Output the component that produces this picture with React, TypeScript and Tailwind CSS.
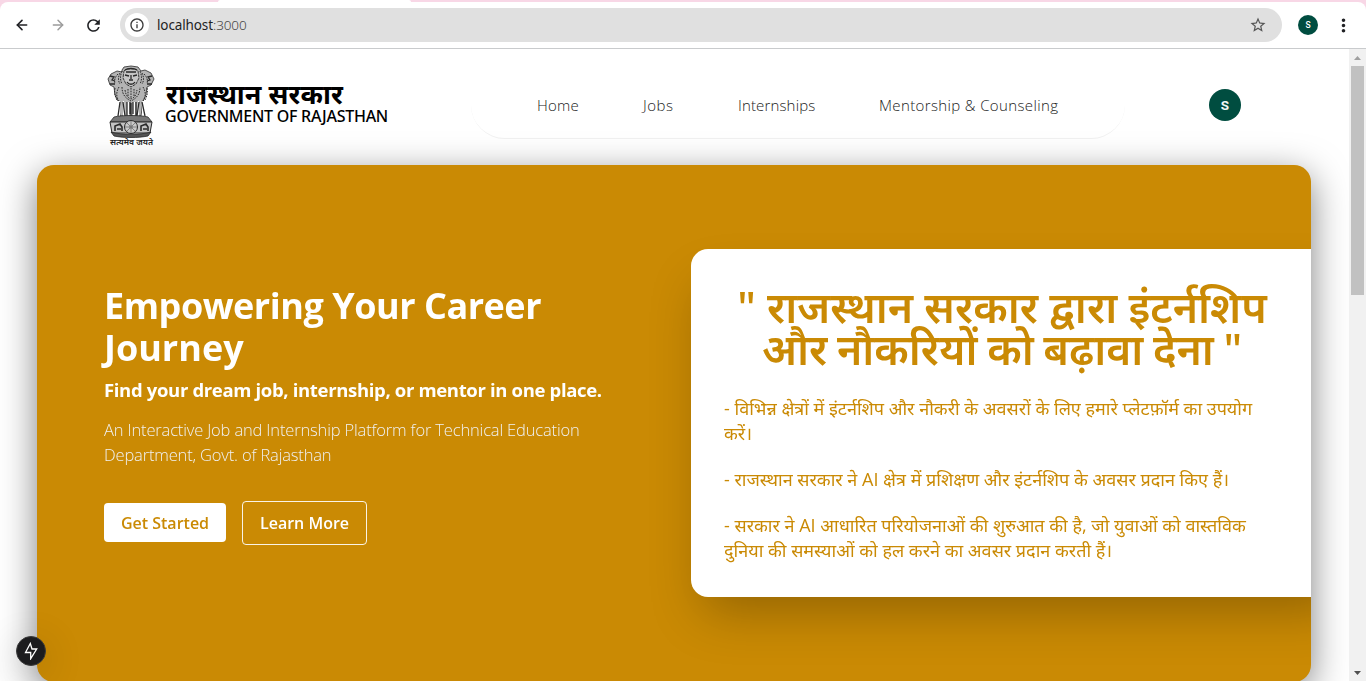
import { ArrowLeft, ArrowRight } from "lucide-react";
import { MdRefresh, MdStarBorder, MdMoreVert, MdOutlineInfo } from "react-icons/md";

function Toolbar() {
  return (
    <header className="h-[49px] shrink-0 bg-[#f8d7e6] pt-0.5">
      <div className="relative flex h-[47px] items-center rounded-t-[8px] border-b border-[#c9cbcd] bg-white font-['Noto_Sans',sans-serif]">
        <span className="absolute -top-0.5 left-[218px] h-0.5 w-[193px] rounded-t-sm bg-white" />
        <div className="flex w-[120px] shrink-0 items-center gap-5 pl-3.5 text-[#202124]">
          <ArrowLeft size={16} strokeWidth={2.4} />
          <ArrowRight size={16} strokeWidth={2.2} className="text-[#9b9b9b]" />
          <MdRefresh size={19} className="-ml-0.5" />
        </div>
        <div className="flex h-[34px] w-[1162px] shrink-0 items-center rounded-full bg-[#e0e0e0] pr-[15px] pl-[5px]">
          <span className="flex size-6 items-center justify-center rounded-full bg-white">
            <MdOutlineInfo size={16} className="text-[#3c3c3c]" />
          </span>
          <span className="ml-2 grow text-[13.5px] tracking-[-0.12px] text-[#1f1f1f]">
            localhost<span className="font-light text-[#474747]">:3000</span>
          </span>
          <MdStarBorder size={18} className="text-[#555]" />
        </div>
        <span className="ml-4 flex size-5 items-center justify-center rounded-full bg-[#004d40] pt-px font-[Roboto,sans-serif] text-[8.5px] font-medium text-white">
          S
        </span>
        <MdMoreVert size={21} className="ml-[15px] text-[#202124]" />
      </div>
    </header>
  );
}

function Emblem() {
  return (
    <svg width="50" height="82" viewBox="0 0 50 82" fill="none" stroke="#2a2a2a" strokeWidth="1">
      <path
        fill="#b4b4b4"
        strokeWidth=".8"
        d="M16 5l2-3 7-1 7 1 3 4 4-1 6 3 3 6-3 6-4 2-1 8-3 6-2 15H14l-2-15-3-6-1-8-4-2-2-6 3-5 6-3 5 1z"
      />
      <path
        strokeDasharray="1.6 1.1"
        d="M16 6c-2 5-2 9 0 13m18-13c2 5 2 9 0 13M14 8c-2 4-2 8 0 11m22-11c2 4 2 8 0 11M12 9c-3 3-4 6-3 10m29-10c3 3 4 6 3 10M13 22c-3 5-3 10 0 14m24-14c3 5 3 10 0 14M9 23c-1 5 0 8 2 12m30-12c1 5 0 8-2 12M16 22c0 7 3 11 9 14 6-3 9-7 9-14M19 25c1 6 3 8 6 9 3-1 5-3 6-9M22 24v8m6-8v8m-3-9v10"
      />
      <path fill="#c6c6c6" strokeWidth=".9" strokeDasharray="3 .7" d="M18 6c2-3 12-3 14 0l1 7-3 6-5 3-5-3-3-6z" />
      <path
        strokeWidth="1.3"
        d="M19 10l4 1m4 0l4-1M25 10v4m-2 1h4m-6 2c2 3 6 3 8 0M19 5c3-2 9-2 12 0M4 11l4 1-2 3 3 1m-5 3h5M46 11l-4 1 2 3-3 1m5 3h-5M20 7h10"
      />
      <path
        fill="#fff"
        stroke="none"
        d="M10 36l2 15h2V36zm7 0h1l1 15h-2zm4 1h2v15h-2zm6 0h2v15h-2zm5-1h1v15h-2zm4 0h3l-2 15h-1z"
      />
      <path
        strokeWidth="1.3"
        d="M14 37l-2 14m5-14l2 14m2-14v15m3-15v12m3-12v12m3-12v15m3-15l-2 14m5-14l3 14M25 38v14"
      />
      <path fill="#777" strokeWidth=".8" d="M8 52c8-2 26-2 34 0l4 5H4z" />
      <path fill="#c4c4c4" d="M4 57h42l-2 11H6z" />
      <circle cx="25" cy="62" r="6.5" fill="#c9c9c9" />
      <path stroke="#666" strokeWidth=".7" d="M25 56v12m-6-6h12m-10-4l8 8m0-8l-8 8" />
      <circle cx="25" cy="62" r="1.800" fill="#777" stroke="none" />
      <path strokeWidth="1.6" d="M9 66v-5l5-2 2 3v4m-5-2h4M35 66v-5l5-2 2 3v4m-5-2h4" />
      <path fill="#555" strokeWidth=".8" d="M5 67c10 3 30 3 40 0l-3 4c-10 2-24 2-34 0z" />
      <text
        x="25.500"
        y="80"
        textAnchor="middle"
        textLength="43"
        lengthAdjust="spacingAndGlyphs"
        stroke="none"
        fill="#222"
        className="font-['Noto_Sans',sans-serif] text-[8.5px] font-semibold"
      >
        सत्यमेव जयते
      </text>
    </svg>
  );
}

function SiteHeader() {
  return (
    <div className="flex h-[116px] items-start">
      <div className="flex w-[471px] shrink-0 pt-4 pl-[106px]">
        <Emblem />
        <div className="ml-[10px] flex flex-col pt-[13px] font-['Noto_Sans',sans-serif] text-black">
          <span className="text-[27px] leading-[32px] font-bold tracking-[0.05px] whitespace-nowrap">राजस्थान सरकार</span>
          <span className="-mt-[5px] -ml-px text-[16px] leading-[22px] font-medium tracking-[-0.25px] whitespace-nowrap">
            GOVERNMENT OF RAJASTHAN
          </span>
        </div>
      </div>
      <nav className="mt-6 flex h-[66px] w-[654px] shrink-0 items-center gap-16 rounded-b-[34px] border-b border-[#f1f1f1] pl-[66px] text-[15px] font-light text-[#222]">
        <span className="w-[42px] tracking-[0.25px] whitespace-nowrap">Home</span>
        <span className="w-[31px] tracking-[0.5px] whitespace-nowrap">Jobs</span>
        <span className="w-[77px] tracking-[0.15px] whitespace-nowrap">Internships</span>
        <span className="tracking-[0.37px] whitespace-nowrap">Mentorship &amp; Counseling</span>
      </nav>
      <span className="mt-10 ml-[84px] flex size-8 items-center justify-center rounded-full bg-[#004d40] pt-px font-[Roboto,sans-serif] text-[13.5px] font-bold text-[#f1f5f4]">
        S
      </span>
    </div>
  );
}

function Hero() {
  return (
    <section className="ml-[37px] flex h-[517px] w-[1274px] shrink-0 overflow-hidden rounded-[17px] bg-[#ca8a04]">
      <div className="w-[654px] shrink-0 pt-[120px] pl-[67px]">
        <h1 className="text-[36px] leading-[42px] font-bold tracking-[-0.47px] whitespace-nowrap text-white">
          Empowering Your Career
          <br />
          <span className="tracking-normal">Journey</span>
        </h1>
        <p className="mt-[7px] text-[18.5px] leading-[28px] font-bold tracking-[-0.34px] whitespace-nowrap text-white">
          Find your dream job, internship, or mentor in one place.
        </p>
        <p className="mt-[13px] text-[16.5px] leading-[25px] font-light tracking-[-0.16px] whitespace-nowrap text-[#f0f1f3]">
          An Interactive Job and Internship Platform for Technical Education
          <br />
          Department, Govt. of Rajasthan
        </p>
        <div className="mt-[34px] flex items-start gap-4 text-[16px] font-semibold">
          <button className="mt-0.5 h-[39px] w-[122px] rounded-[4px] bg-white pt-px whitespace-nowrap text-[#ca8a04]">Get Started</button>
          <button className="h-[44px] w-[125px] rounded-[4px] border border-white/90 whitespace-nowrap text-white">Learn More</button>
        </div>
      </div>
      <div className="mt-[84px] h-[348px] w-[660px] shrink-0 rounded-[17px] bg-white pt-[37px] pl-[33px] text-[#ca8a04] shadow-[0_26px_52px_-12px_rgba(0,0,0,0.28)]">
        <h2 className="w-[556px] text-center text-[42.8px] leading-[42px] font-semibold whitespace-nowrap">
          " राजस्थान सरकार द्वारा इंटर्नशिप
          <br />
          <span className="[word-spacing:-1.5px]">और नौकरियों को बढ़ावा देना "</span>
        </h2>
        <div className="mt-[26px] flex flex-col gap-[21px] text-[18px] leading-[25px] whitespace-nowrap">
          <p>
            - विभिन्न क्षेत्रों में इंटर्नशिप और नौकरी के अवसरों के लिए हमारे प्लेटफ़ॉर्म का उपयोग
            <br />
            करें।
          </p>
          <p>- राजस्थान सरकार ने AI क्षेत्र में प्रशिक्षण और इंटर्नशिप के अवसर प्रदान किए हैं।</p>
          <p>
            - सरकार ने AI आधारित परियोजनाओं की शुरुआत की है, जो युवाओं को वास्तविक
            <br />
            दुनिया की समस्याओं को हल करने का अवसर प्रदान करती हैं।
          </p>
        </div>
      </div>
    </section>
  );
}

function Scrollbar() {
  return (
    <div className="flex w-[17px] shrink-0 flex-col items-center bg-[#f1f1f1]">
      <svg width="17" height="17" className="shrink-0">
        <path d="M5 11h7L8.500 7z" fill="#a0a0a0" />
      </svg>
      <div className="h-[229px] w-[13px] bg-[#c1c1c1]" />
      <svg width="17" height="17" className="mt-auto shrink-0">
        <path d="M5 7h7l-3.500 4z" fill="#505050" />
      </svg>
    </div>
  );
}

export default function App() {
  return (
    <div className="relative flex h-[681px] w-[1366px] flex-col overflow-hidden bg-white">
      <Toolbar />
      <div className="flex h-[632px]">
        <main className="h-[632px] w-[1349px] overflow-hidden font-['Open_Sans','Noto_Sans',sans-serif]">
          <SiteHeader />
          <div className="rounded-[17px] [filter:drop-shadow(0_10px_18px_rgba(0,0,0,0.5))]">
            <Hero />
          </div>
        </main>
        <Scrollbar />
      </div>
      <div className="absolute top-[636px] left-4 flex size-[30px] items-center justify-center rounded-full border border-[#3a3a3a] bg-[#1c1c1e] shadow-[0_8px_40px_rgba(0,0,0,0.2)]">
        <svg width="16" height="18" viewBox="0 0 16 18" fill="none" stroke="white" strokeWidth="1.300" strokeLinejoin="miter">
          <path d="M7.300 1.500L2.500 10.500h5.200v6.200l6-9.700h-4.700z" />
        </svg>
      </div>
    </div>
  );
}
